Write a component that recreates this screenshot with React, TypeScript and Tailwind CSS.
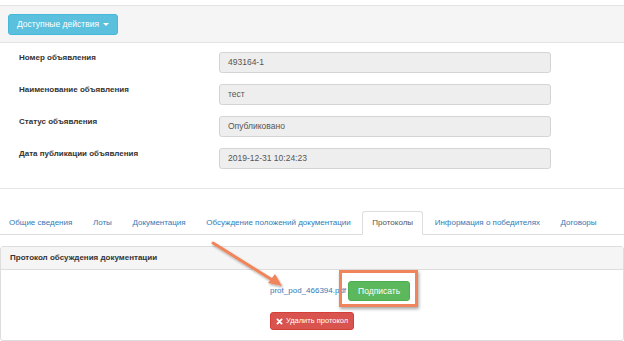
import React from "react";

const tabs = [
  "Общие сведения",
  "Лоты",
  "Документация",
  "Обсуждение положений документации",
  "Протоколы",
  "Информация о победителях",
  "Договоры",
];

const rows: [string, string][] = [
  ["Номер объявления", "493164-1"],
  ["Наименование объявления", "тест"],
  ["Статус объявления", "Опубликовано"],
  ["Дата публикации объявления", "2019-12-31 10:24:23"],
];

export default function App() {
  return (
    <div className="relative w-[624px] h-[341px] overflow-hidden bg-white font-['Liberation_Sans',Arial,sans-serif] text-[#333]">
      <div className="h-[5px]" />
      <div className="h-[38px] bg-[#f5f5f5] border-y border-[#e3e3e3] flex items-center px-[8px]">
        <button className="h-[21px] px-[8px] rounded-[3px] bg-[#5bc0de] border border-[#46b8da] text-white text-[8.5px] whitespace-nowrap flex items-center gap-[4px]">
          Доступные действия
          <span className="w-0 h-0 border-x-[3px] border-x-transparent border-t-[3px] border-t-white" />
        </button>
      </div>

      <div className="pt-[9px] pb-[19px] border-b border-[#e5e5e5] flex flex-col gap-[11px]">
        {rows.map(([l, v]) => (
          <div key={l} className="flex h-[21px]">
            <div className="w-[219px] pl-[19px] text-[8px] font-bold text-[#333] whitespace-nowrap">{l}</div>
            <div className="w-[332px] h-[21px] bg-[#eeeeee] border border-[#d4d4d4] rounded-[3px] flex items-center px-[8px] text-[8.5px] text-[#555]">
              {v}
            </div>
          </div>
        ))}
      </div>

      <div className="mt-[22px] flex border-b border-[#dddddd] h-[24px]">
        {tabs.map((t) => {
          const active = t === "Протоколы";
          return (
            <div
              key={t}
              className={
                active
                  ? "shrink-0 whitespace-nowrap mr-[2.6px] px-[9px] h-[24px] -mb-px bg-white border border-[#dddddd] border-b-white rounded-t-[3px] flex items-center text-[8px] text-[#555]"
                  : "shrink-0 whitespace-nowrap mr-[2.6px] px-[9px] h-[23px] flex items-center text-[8px] text-[#337ab7]"
              }
            >
              {t}
            </div>
          );
        })}
      </div>

      <div className="mt-[11px] border border-[#dddddd] rounded-[3px] h-[95px]">
        <div className="h-[23px] bg-[#f5f5f5] border-b border-[#dddddd] flex items-center px-[9px] text-[8px] font-bold text-[#333]">
          Протокол обсуждения документации
        </div>
        <div className="pl-[269px] pt-[11px] flex flex-col items-start gap-[11px]">
          <div className="flex items-center gap-[2px]">
            <span className="text-[8px] text-[#337ab7]">prot_pod_466394.pdf</span>
            <button className="h-[20px] px-[9px] rounded-[3px] bg-[#5cb85c] border border-[#4cae4c] text-white text-[8.5px] whitespace-nowrap">
              Подписать
            </button>
          </div>
          <button className="h-[18px] px-[5px] rounded-[3px] bg-[#d9534f] border border-[#d43f3a] text-white text-[7.5px] whitespace-nowrap flex items-center gap-[3px]">
            <svg width="7" height="7" viewBox="0 0 10 10">
              <path d="M2 2 L8 8 M8 2 L2 8" stroke="white" strokeWidth="2.6" strokeLinecap="round" />
            </svg>
            Удалить протокол
          </button>
        </div>
      </div>

      {/* annotation overlay */}
      <div className="absolute left-[339px] top-[270px] w-[79px] h-[37px] border-[3px] border-[#f0855c] shadow-[1px_2px_3px_rgba(0,0,0,0.35)]" />
      <svg className="absolute left-0 top-0 pointer-events-none" width="624" height="341">
        <defs>
          <filter id="sh" x="-20%" y="-20%" width="140%" height="140%">
            <feDropShadow dx="1" dy="1.5" stdDeviation="1" floodColor="#000" floodOpacity="0.35" />
          </filter>
        </defs>
        <g filter="url(#sh)">
          <line x1="213" y1="243" x2="274" y2="281" stroke="#f0855c" strokeWidth="3" strokeLinecap="round" />
          <path d="M282 286 L268 283 L275 274 Z" fill="#f0855c" />
        </g>
      </svg>
    </div>
  );
}
